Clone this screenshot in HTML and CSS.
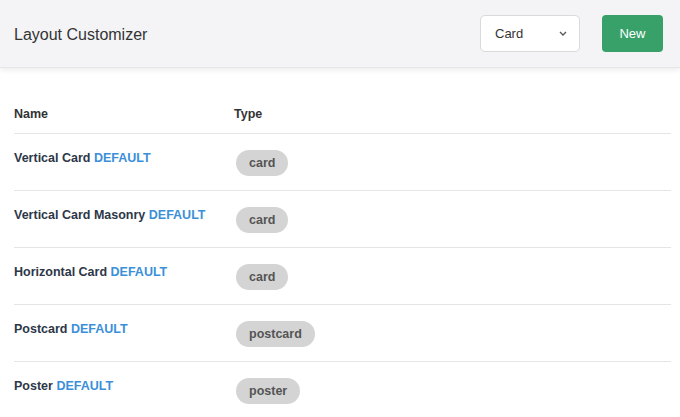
FILE: index.html
```html
<!DOCTYPE html>
<html>
<head>
<meta charset="utf-8">
<link rel="stylesheet" href="styles.css">
</head>
<body>
<header class="topbar">
  <h1 class="title">Layout Customizer</h1>
  <div class="actions">
    <div class="select">
      <span>Card</span>
      <svg class="chev" width="8" height="5" viewBox="0 0 8 5"><path d="M1 1 L4 4 L7 1" fill="none" stroke="#555" stroke-width="1.3"/></svg>
    </div>
    <button class="btn-new">New</button>
  </div>
</header>
<main class="content">
  <table class="layouts">
    <thead>
      <tr><th class="col-name">Name</th><th>Type</th></tr>
    </thead>
    <tbody>
      <tr><td class="name">Vertical Card <span class="def">DEFAULT</span></td><td><span class="badge">card</span></td></tr>
      <tr><td class="name">Vertical Card Masonry <span class="def">DEFAULT</span></td><td><span class="badge">card</span></td></tr>
      <tr><td class="name">Horizontal Card <span class="def">DEFAULT</span></td><td><span class="badge">card</span></td></tr>
      <tr><td class="name">Postcard <span class="def">DEFAULT</span></td><td><span class="badge">postcard</span></td></tr>
      <tr><td class="name">Poster <span class="def">DEFAULT</span></td><td><span class="badge">poster</span></td></tr>
    </tbody>
  </table>
</main>
</body>
</html>
```
FILE: styles.css
```css
* { box-sizing: border-box; }
html, body { margin: 0; padding: 0; background: #fff; }
body { font-family: "Liberation Sans", Arial, sans-serif; color: #2d3748; overflow: hidden; }
.topbar {
  height: 68px;
  background: #f4f4f6;
  display: flex;
  align-items: center;
  justify-content: space-between;
  padding: 0 17px 0 14px;
  box-shadow: 0 2px 6px rgba(0,0,0,0.08);
  border-bottom: 1px solid #e6e6ea;
  position: relative;
}
.title { margin: 3px 0 0; font-size: 16px; font-weight: normal; color: #333; }
.actions { display: flex; align-items: center; gap: 22px; }
.select {
  width: 100px; height: 37px;
  background: #fff;
  border: 1px solid #d9d9de;
  border-radius: 5px;
  display: flex; align-items: center; justify-content: space-between;
  padding: 0 12px 0 14px;
  font-size: 13px; color: #333;
}
.chev { display: block; }
.btn-new {
  width: 61px; height: 37px;
  background: #38a169;
  border: none; border-radius: 4px;
  color: #fff;
  font-family: inherit; font-size: 13px;
}
.content { padding: 33px 9px 0 14px; }
.layouts { width: 100%; border-collapse: collapse; font-size: 12.5px; }
.layouts th {
  text-align: left; font-weight: bold; color: #333;
  padding: 6px 0 11px; border-bottom: 1px solid #e5e5e5; font-size: 12.5px;
  line-height: 15px;
}
.col-name { width: 220px; }
.layouts td { vertical-align: top; padding: 16px 0 0; border-bottom: 1px solid #e5e5e5; height: 57px; line-height: 16px; }
.name { font-weight: bold; color: #2d3748; }
.def { color: #3b8fd9; }
.layouts td .badge {
  display: block; width: fit-content; height: 26px; line-height: 26px;
  padding: 0 13px; margin-left: 2px;
  background: #d4d4d4; color: #555; font-weight: bold;
  border-radius: 13px; font-size: 12.5px;
}
```
